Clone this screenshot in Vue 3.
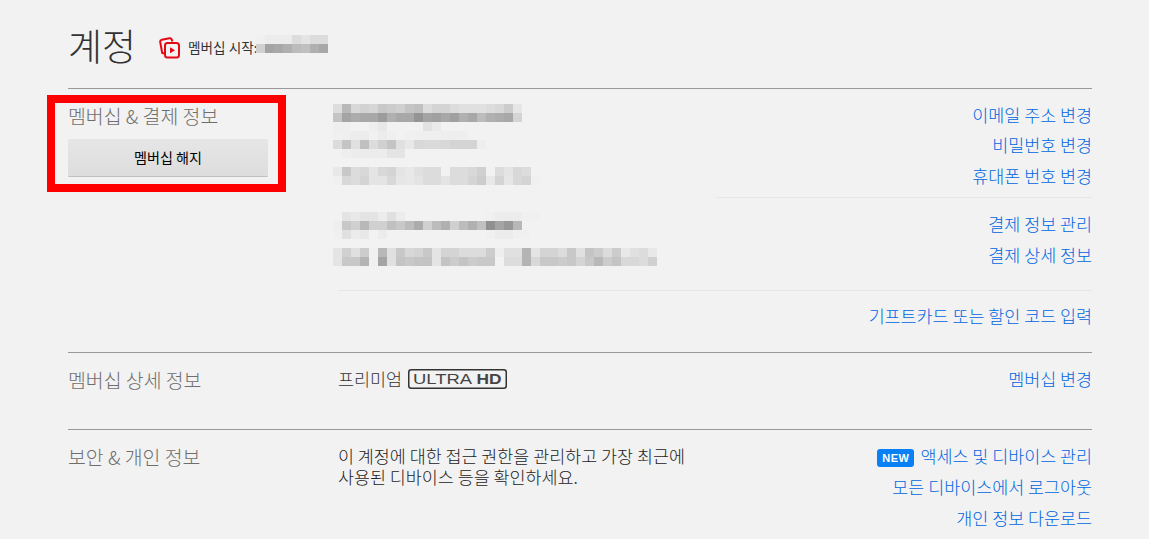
<script setup>
const hex = (row) => row.map((v) => (v === '' ? 'transparent' : `#${v}${v}${v}`))
const raw = (s) => s.split(',').map((v) => v.trim())

const titleRows = [
  'f0,ec,ec,ec,dc,e4,dc,dc',
  'd0,a4,a8,b0,bc,c0,b0,a8',
].map((r) => hex(raw(r)))

const contactRows = [
  'dd,b8,d8,d2,d6,c8,cc,d0,c4,c0,dc,d4,d4,dc,e0,e0,e0,dc,d8,cc,e6',
  'c4,a4,ac,a8,a8,9c,b0,a8,a8,94,a4,a0,a8,a0,b0,a8,bc,b0,ac,a8,d4',
  'ef,ef,f2,f2,ee,e8,f2,f2,f2,f2,e2,ea',
  'f0,ef,ec,ec,f1,ec,ef,f2,f0,ef,ef,ef,ee,ee,ee',
  'dc,c4,e0,c0,dc,d0,c4,e0,e8,d8,da,da,d8,d4,d4,d4,ee',
  'f2,ee,ec,ec,ec,ec,e4,e4',
  '',
  'e8,c8,dc,d8,e4,d8,d4,e4,e8,e0,dc,dc,f2,dc,dc,d8,d0,f2,dc,e4,d8,dc',
  'f0,d8,dc,d4,e4,e4,d8,e6,e8,e4,dc,dc,e4,dc,dc,d4,cc,e8,d4,e6,d8,d4,f0',
].map((r) => hex(raw(r)))

const payRows = [
  'f2,e4,e8,e4,e4,ec,e0,ec,f2,f2,f2,f2,f2,f2,f2,f2,f2,f0,ec,ec,ec,f0,f0',
  'ee,c8,d0,b8,d0,d0,c0,c8,bc,ac,d0,bc,b0,d0,bc,b0,c0,90,a4,98,b8',
  'f0,e0,ec,e8,f2,ec,f2,f2,f2,f2,f2,f2,f2,f2,f2,f2,f2,f0,ec,ec,f0,f0,f2',
  '',
  'e4,d0,e0,cc,f0,b8,e0,c8,d8,d4,c8,e4,d4,d4,dc,dc,dc,cc,ee,e0,e0,b4,e4,d4,d4,dc,c8,e0,c4,cc,dc,cc,e8,e0,dc,e8',
  'e4,c8,c8,b4,f0,a4,e0,c4,c8,c4,c4,e4,c4,cc,c4,cc,c8,c8,f2,dc,dc,b4,d8,c8,c8,cc,c8,d4,c8,b8,cc,c4,d8,d8,dc,d0',
].map((r) => hex(raw(r)))
</script>

<template>
  <div class="page">
    <header class="head">
      <h1 class="title">계정</h1>
      <div class="since">
        <svg class="since-icon" width="22" height="22" viewBox="0 0 22 22" fill="none">
          <path d="M5.5 16.5 3.2 16 1.2 5a2 2 0 0 1 1.6-2.3L10.5 1.2a2 2 0 0 1 2.3 1.4l.5 2" stroke="#e50914" stroke-width="2" stroke-linejoin="round" />
          <rect x="6" y="6" width="14" height="14.5" rx="2.5" stroke="#e50914" stroke-width="2" />
          <path d="M11 10.2v6l5-3z" fill="#e50914" />
        </svg>
        <span class="since-text">멤버십 시작:</span>
        <div class="mosaic">
          <div v-for="(row, r) in titleRows" :key="r" class="m-row">
            <i v-for="(c, k) in row" :key="k" :style="{ background: c }"></i>
          </div>
        </div>
      </div>
    </header>

    <section class="sec sec-bill">
      <div class="left">
        <h2 class="sec-title">멤버십 &amp; 결제 정보</h2>
        <button class="cancel" type="button">멤버십 해지</button>
        <div class="highlight"></div>
      </div>
      <div class="main">
        <div class="group group-contact">
          <div class="mosaic shift">
            <div v-for="(row, r) in contactRows" :key="r" class="m-row">
              <i v-for="(c, k) in row" :key="k" :style="{ background: c }"></i>
            </div>
          </div>
          <div class="links up-contact">
            <a>이메일 주소 변경</a>
            <a>비밀번호 변경</a>
            <a>휴대폰 번호 변경</a>
          </div>
        </div>
        <div class="group group-pay">
          <div class="mosaic shift">
            <div v-for="(row, r) in payRows" :key="r" class="m-row">
              <i v-for="(c, k) in row" :key="k" :style="{ background: c }"></i>
            </div>
          </div>
          <div class="links up3">
            <a>결제 정보 관리</a>
            <a>결제 상세 정보</a>
          </div>
        </div>
        <div class="group group-gift">
          <div class="links">
            <a>기프트카드 또는 할인 코드 입력</a>
          </div>
        </div>
      </div>
    </section>

    <section class="sec sec-plan">
      <div class="left">
        <h2 class="sec-title">멤버십 상세 정보</h2>
      </div>
      <div class="main row">
        <div class="plan">
          <span>프리미엄</span>
          <svg class="badge" width="99" height="20" viewBox="0 0 99 20">
            <rect x=".75" y=".75" width="97.5" height="18.5" rx="2.5" fill="none" stroke="#333" stroke-width="1.5" />
            <text x="5" y="15" class="b-ultra" textLength="59" lengthAdjust="spacingAndGlyphs">ULTRA</text>
            <text x="68.5" y="15" class="b-hd" textLength="25" lengthAdjust="spacingAndGlyphs">HD</text>
          </svg>
        </div>
        <div class="links">
          <a>멤버십 변경</a>
        </div>
      </div>
    </section>

    <section class="sec sec-sec">
      <div class="left">
        <h2 class="sec-title">보안 &amp; 개인 정보</h2>
      </div>
      <div class="main row">
        <p class="desc">이 계정에 대한 접근 권한을 관리하고 가장 최근에<br />사용된 디바이스 등을 확인하세요.</p>
        <div class="links wide">
          <a><span class="new">NEW</span>액세스 및 디바이스 관리</a>
          <a>모든 디바이스에서 로그아웃</a>
          <a>개인 정보 다운로드</a>
        </div>
      </div>
    </section>
  </div>
</template>

<style>
html, body { margin: 0; background: #f2f2f2; overflow: hidden; }
</style>

<style scoped>
.page {
  width: 1024px;
  height: 539px;
  margin-left: 68px;
  font-family: "Noto Sans CJK KR", "Noto Sans", sans-serif;
  font-weight: 300;
  color: #333;
}
.head {
  height: 88px;
  display: flex;
  align-items: flex-start;
  border-bottom: 1px solid #999;
}
.title {
  margin: 18px 0 0;
  font-size: 37px;
  line-height: 54px;
  font-weight: 300;
}
.since {
  display: flex;
  align-items: flex-start;
  margin: 35px 0 0 23px;
}
.since-icon { margin: 2px 7px 0 0; }
.since-text { font-size: 13.6px; line-height: 24px; font-weight: 400; white-space: nowrap; }
.mosaic { flex: none; }
.since .mosaic { margin-left: -1px; }
.m-row { display: flex; height: 9px; }
.m-row i { display: block; width: 9px; height: 9px; flex: none; }
.sec { display: flex; }
.left { position: relative; width: 270px; flex: none; }
.sec-title {
  margin: 0;
  font-size: 19.4px;
  line-height: 28px;
  font-weight: 300;
  color: #6e6e6e;
}
.sec-bill { height: 250px; padding-top: 13px; }
.cancel {
  display: block;
  width: 200px;
  height: 37px;
  margin-top: 9px;
  padding: 0;
  border: 0;
  border-radius: 1px;
  background: linear-gradient(#e6e6e6, #dddddd);
  box-shadow: 0 1px 0 rgba(0, 0, 0, .2);
  font: 400 14.1px/37px "Noto Sans CJK KR", sans-serif;
  color: #000;
}
.highlight {
  position: absolute;
  left: -21px;
  top: -7px;
  width: 239px;
  height: 97px;
  box-sizing: border-box;
  border: 8px solid #f00;
  pointer-events: none;
}
.main { flex: 1; min-width: 0; }
.row { display: flex; justify-content: space-between; align-items: flex-start; margin-top: -2px; }
.group { display: flex; justify-content: space-between; align-items: flex-start; }
.shift { margin-left: -5px; }
.group-contact {
  height: 93px;
  margin-top: 2px;
  border-bottom: 1px solid;
  border-image: linear-gradient(to right, #f0f0f0 379px, #e6e6e6 379px) 1;
}
.group-pay { height: 93px; padding-top: 14px; box-sizing: border-box; border-bottom: 1px solid #e6e6e6; }
.group-gift { justify-content: flex-end; padding-top: 10px; }
.links { display: flex; flex-direction: column; align-items: flex-end; margin-left: auto; }
.up-contact { margin-top: -4.5px; }
.up3 { margin-top: -3px; }
.links a {
  display: block;
  font-size: 17.4px;
  line-height: 30.5px;
  color: #0066e0;
  white-space: nowrap;
}
.links.wide { margin-top: -1px; }
.links.wide a { line-height: 31px; }
.sec-plan { border-top: 1px solid #999; height: 63px; padding-top: 13px; }
.sec-sec { border-top: 1px solid #999; padding-top: 13px; }
.plan { display: flex; align-items: center; gap: 6px; margin-top: 1px; font-size: 17.4px; line-height: 28px; color: #333; }
.badge { display: block; flex: none; }
.b-ultra { font: 400 14px "Liberation Sans", sans-serif; fill: #444; }
.b-hd { font: 700 14px "Liberation Sans", sans-serif; fill: #444; }
.desc { margin: 4px 0 0; font-size: 17.4px; line-height: 21px; color: #222; white-space: nowrap; }
.new {
  display: inline-block;
  height: 18px;
  padding: 0 5px;
  margin-right: 6px;
  border-radius: 3px;
  background: #0a80f5;
  color: #fff;
  font: 700 11px/18px "Liberation Sans", sans-serif;
  letter-spacing: .5px;
  vertical-align: 1px;
}
</style>
